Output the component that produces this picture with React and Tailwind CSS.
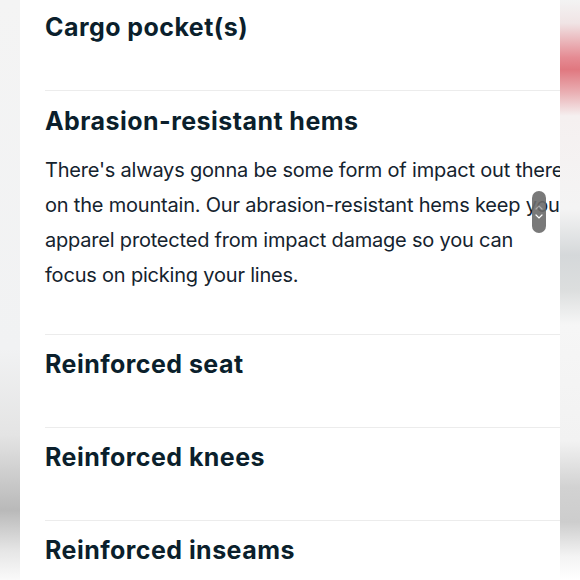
export default function App() {
  const collapsed = ["Reinforced seat", "Reinforced knees", "Reinforced inseams"];

  return (
    <div className="w-[580px] h-[580px] flex overflow-hidden bg-white font-['Inter','Liberation_Sans',sans-serif] text-[#0b1f2c]">
      <div className="w-[20px] h-full shrink-0 bg-[linear-gradient(to_bottom,#f4f4f4_0%,#f1f2f3_60%,#e4e4e4_75%,#b9b9b9_88%,#e6e6e6_95%,#fafafa_100%)]" />

      <div className="relative w-[540px] h-full shrink-0 bg-white overflow-hidden">
        <div className="ml-[25px]">
          <section className="pt-[11px] pb-[47px]">
            <h3 className="text-[25px] leading-[32px] font-bold tracking-[0.45px] whitespace-nowrap">Cargo pocket(s)</h3>
          </section>

          <section className="border-t border-[#ececec] pt-[14px] pb-[41px]">
            <h3 className="text-[25px] leading-[32px] font-bold tracking-[0.45px] whitespace-nowrap">Abrasion-resistant hems</h3>
            <p className="mt-[16px] text-[20px] leading-[35px] tracking-[-0.2px] text-[#15232e] whitespace-nowrap">
              There's always gonna be some form of impact out there
              <br />
              on the mountain. Our abrasion-resistant hems keep you
              <br />
              apparel protected from impact damage so you can
              <br />
              focus on picking your lines.
            </p>
          </section>

          {collapsed.map((title) => (
            <section key={title} className="border-t border-[#ececec] pt-[13px] pb-[47px]">
              <h3 className="text-[25px] leading-[32px] font-bold tracking-[0.45px] whitespace-nowrap">{title}</h3>
            </section>
          ))}
        </div>

        <div className="absolute left-[512px] top-[191px] w-[14px] h-[42px] rounded-full bg-[#6a6a6a]/90 flex flex-col items-center justify-center gap-[4px]">
          <svg width="8" height="5" viewBox="0 0 8 5" fill="none" className="opacity-40">
            <path d="M1 4L4 1L7 4" stroke="#ffffff" strokeWidth="1.2" strokeLinecap="round" />
          </svg>
          <svg width="8" height="5" viewBox="0 0 8 5" fill="none">
            <path d="M1 1L4 4L7 1" stroke="#ffffff" strokeWidth="1.2" strokeLinecap="round" />
          </svg>
        </div>
      </div>

      <div className="w-[20px] h-full shrink-0 bg-[linear-gradient(to_bottom,#f3f3f3_0%,#f0e4e5_4%,#e58a92_10%,#e07880_12%,#eab0b4_16%,#f5f0f0_20%,#f4f4f4_36%,#d5d8da_44%,#dcdede_50%,#f6f6f6_56%,#f2f2f2_76%,#d2d2d2_84%,#cdcdcd_90%,#f4f4f4_96%,#ffffff_100%)]" />
    </div>
  );
}
